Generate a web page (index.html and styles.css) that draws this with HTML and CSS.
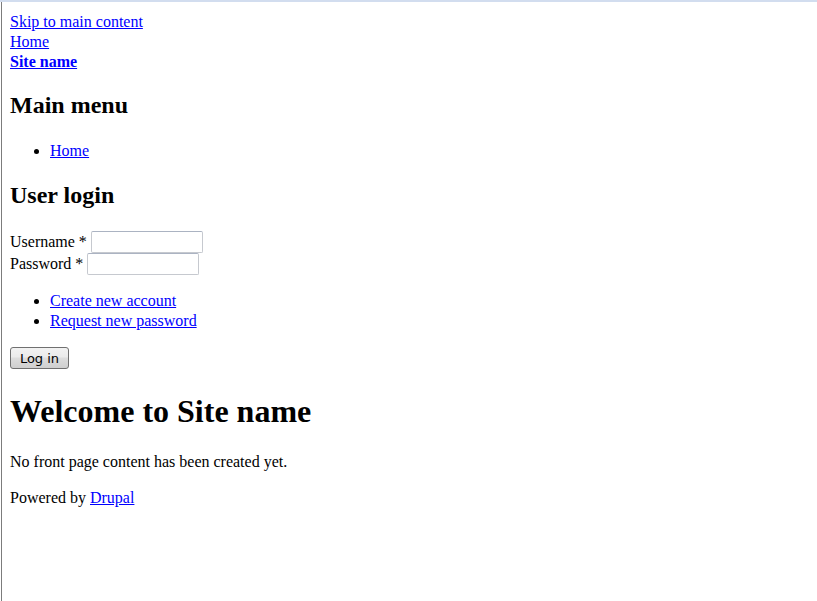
FILE: index.html
```html
<!DOCTYPE html>
<html lang="en">
<head>
  <meta charset="UTF-8" />
  <title>Site name</title>
  <link rel="stylesheet" href="styles.css">
</head>
<body>
  <div class="frame">
    <div class="page">
      <a href="#main-content" class="skip">Skip to main content</a>
      <div class="branding">
        <a href="#" class="logo">Home</a>
        <strong><a href="#" class="site-name">Site name</a></strong>
      </div>

      <div class="block">
        <h2>Main menu</h2>
        <ul class="menu">
          <li><a href="#">Home</a></li>
        </ul>
      </div>

      <div class="block">
        <h2>User login</h2>
        <form class="login">
          <div class="field">
            <label for="name">Username *</label>
            <input type="text" id="name" class="text-input">
          </div>
          <div class="field">
            <label for="pass">Password *</label>
            <input type="password" id="pass" class="text-input">
          </div>
          <ul class="links">
            <li><a href="#">Create new account</a></li>
            <li><a href="#">Request new password</a></li>
          </ul>
          <button type="button" class="btn">Log in</button>
        </form>
      </div>

      <div id="main-content" class="content">
        <h1>Welcome to Site name</h1>
        <p>No front page content has been created yet.</p>
      </div>

      <p class="footer">Powered by <a href="#">Drupal</a></p>
    </div>
  </div>
</body>
</html>
```

FILE: styles.css
```css
html, body {
  margin: 0;
  padding: 0;
  height: 100%;
  background: #fff;
}

body {
  font-family: "Liberation Serif", "Times New Roman", serif;
  font-size: 16px;
  line-height: 20px;
  color: #000;
}

a {
  color: #0000ff;
}

.frame {
  height: 100%;
  box-sizing: border-box;
  border-top: 2px solid #d2ddef;
  padding-left: 1px;
}

.page {
  height: 100%;
  box-sizing: border-box;
  border-left: 1px solid #7c7c7c;
  padding: 10px 8px 0 8px;
}

.skip,
.branding a {
  display: block;
}

h2 {
  font-size: 24px;
  line-height: 30px;
  margin: 18px 0 21px;
}

h1 {
  font-size: 32px;
  line-height: 36px;
  margin: 24px 0 23px;
}

ul {
  margin: 0 0 16px;
  padding-left: 40px;
}

.menu {
  margin-bottom: 19px;
}

.field {
  height: 22px;
  display: flex;
  align-items: center;
}

.field label {
  margin-right: 4px;
}

.text-input {
  width: 112px;
  height: 22px;
  box-sizing: border-box;
  border: 1px solid #c6c9cf;
  border-top-color: #abb3c2;
  border-radius: 2px;
  padding: 1px 3px;
  margin: 0;
  font-size: 13px;
}

.login .links {
  margin-top: 16px;
  margin-bottom: 16px;
}

.btn {
  display: block;
  width: 59px;
  height: 22px;
  padding: 0;
  border: 1px solid #707070;
  border-radius: 3px;
  background: linear-gradient(#f2f2f2 0%, #ebebeb 45%, #dddddd 50%, #cfcfcf 100%);
  font-family: "DejaVu Sans", "Liberation Sans", sans-serif;
  font-size: 13px;
  color: #000;
}

p {
  margin: 16px 0;
}

.footer {
  margin-top: 15px;
}
```
